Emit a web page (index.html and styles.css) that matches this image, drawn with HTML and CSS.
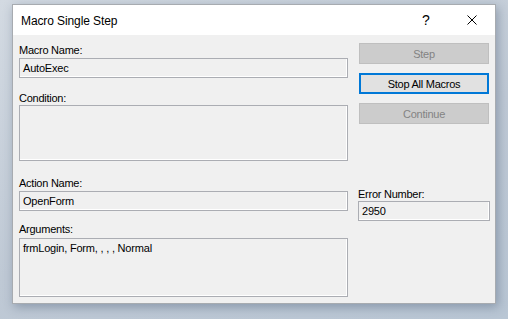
FILE: index.html
```html
<!DOCTYPE html>
<html>
<head>
<meta charset="utf-8">
<title>Macro Single Step</title>
<link rel="stylesheet" href="styles.css">
</head>
<body>
<div class="desktop">
  <div class="dialog">
    <div class="titlebar">
      <span class="title">Macro Single Step</span>
      <span class="tb-btn help">?</span>
      <span class="tb-btn close">
        <svg width="10" height="10" viewBox="0 0 10 10"><path d="M0.5 0.5 L9.5 9.5 M9.5 0.5 L0.5 9.5" stroke="#000" stroke-width="1" fill="none"/></svg>
      </span>
    </div>
    <div class="content">
      <div class="left">
        <div class="field f-name">
          <div class="label">Macro Name:</div>
          <div class="box h20">AutoExec</div>
        </div>
        <div class="field f-cond">
          <div class="label">Condition:</div>
          <div class="box h56"></div>
        </div>
        <div class="field f-action">
          <div class="label">Action Name:</div>
          <div class="box h20">OpenForm</div>
        </div>
        <div class="field f-args">
          <div class="label">Arguments:</div>
          <div class="box h59">frmLogin, Form, , , , Normal</div>
        </div>
      </div>
      <div class="right">
        <div class="btn disabled">Step</div>
        <div class="btn default">Stop All Macros</div>
        <div class="btn disabled">Continue</div>
        <div class="field f-error">
          <div class="label">Error Number:</div>
          <div class="box h20">2950</div>
        </div>
      </div>
    </div>
  </div>
</div>
</body>
</html>
```

FILE: styles.css
```css
html, body {margin:0; padding:0;}
body {width:508px; height:319px; overflow:hidden; font:11px "Liberation Sans", Arial, sans-serif; color:#000;}
.desktop {height:319px; box-sizing:border-box; padding:4px 0 0 12px; background:linear-gradient(160deg, #d3dae2 0%, #bfc9d5 55%, #b9c6d4 100%);}
.dialog {width:484px; height:300px; box-sizing:border-box; border:1px solid #a7abb0; background:#f0f0f0; box-shadow:2px 3px 10px rgba(40,60,90,.35);}
.titlebar {height:30px; background:#fff; display:flex; align-items:center;}
.title {flex:1; padding-left:8px; font-size:12px; letter-spacing:-0.1px; padding-top:1px;}
.tb-btn {width:46px; height:30px; display:flex; align-items:center; justify-content:center;}
.help {font-size:14px; font-family:"Liberation Sans", Arial, sans-serif;}
.close svg {display:block;}
.content {display:flex; padding:8px 0 0 6px; gap:10px;}
.left {width:329px;}
.right {width:132px;}
.label {height:14px; line-height:14px; letter-spacing:-0.25px; white-space:nowrap;}
.box {box-sizing:border-box; border:1px solid #abadb3; box-shadow:inset -1px -1px 0 #fff; padding:2px 3px; line-height:14px; letter-spacing:-0.2px; white-space:nowrap;}
.field .box {margin-top:1px;}
.h20 {height:20px;}
.h56 {height:56px;}
.h59 {height:59px;}
.f-cond {margin-top:13px;}
.f-cond .box {margin-top:0;}
.f-action {margin-top:15px;}
.f-args {margin-top:11px;}
.f-args .box {margin-top:2px;}
.btn {box-sizing:border-box; height:21px; margin:0 1px 9px 1px; display:flex; align-items:center; justify-content:center; letter-spacing:-0.25px;}
.disabled {background:#cccccc; border:1px solid #bfbfbf; color:#838383;}
.default {background:#e1e1e1; border:2px solid #0078d7;}
.f-error {margin-top:63px;}
.f-error .box {margin-top:0;}
```
